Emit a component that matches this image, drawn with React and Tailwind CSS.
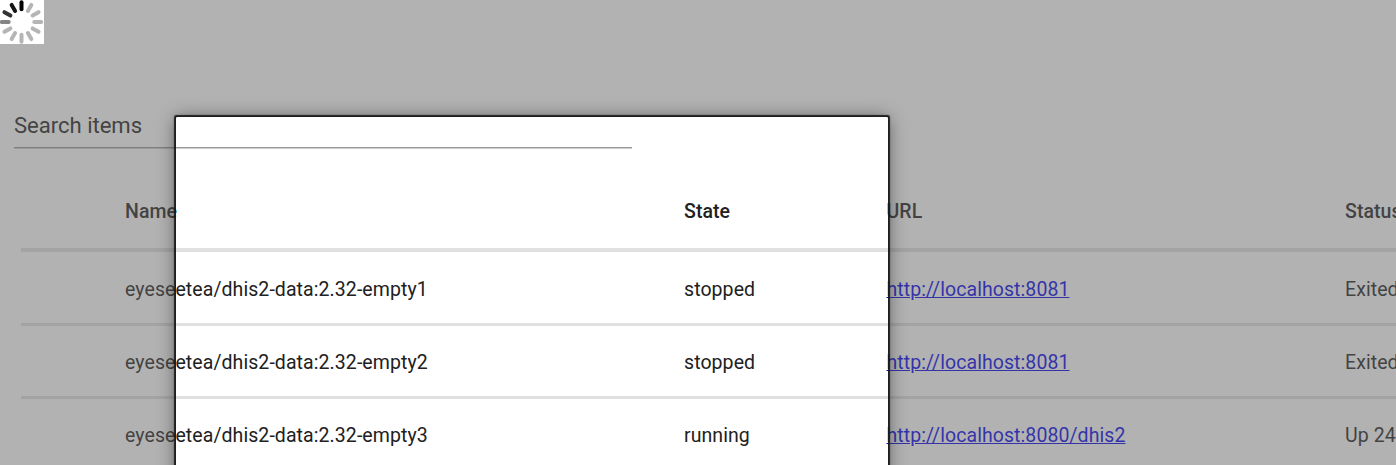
const rows = [
  ["eyeseetea/dhis2-data:2.32-empty1", "stopped", "http://localhost:8081", "Exited"],
  ["eyeseetea/dhis2-data:2.32-empty2", "stopped", "http://localhost:8081", "Exited"],
  ["eyeseetea/dhis2-data:2.32-empty3", "running", "http://localhost:8080/dhis2", "Up 24"],
];

const spokes = ["#000", "#b5b5b5", "#b5b5b5", "#b5b5b5", "#b5b5b5", "#b5b5b5", "#b5b5b5", "#b5b5b5", "#b5b5b5", "#858585", "#343434", "#161616"];

function Spinner() {
  return (
    <svg className="absolute top-0 left-0 z-20 bg-white" width="44" height="44" viewBox="0 0 44 44">
      {spokes.map((color, i) => (
        <line key={i} x1="21.5" y1="2.3" x2="21.5" y2="9.2" stroke={color} strokeWidth="4" strokeLinecap="round" transform={`rotate(${i * 30} 21.5 22)`} />
      ))}
    </svg>
  );
}

const columns = "grid grid-cols-[104px_559px_202.5px_458.5px_200px]";

export default function App() {
  return (
    <div className="relative h-[465px] w-[1396px] overflow-hidden bg-white font-['Roboto',sans-serif] text-[#212121]">
      <Spinner />
      <div className="mb-px ml-[14px] flex h-[148px] w-[618px] items-end border-b border-[#999999] shadow-[0_1px_0_#cfcfcf]">
        <span className="mb-[8px] text-[22.1px] leading-[28px] tracking-[-0.03px] text-[#212121]">Search items</span>
      </div>
      <div className="ml-[21px] w-[1524px] text-[19.5px] leading-[28px] tracking-[0.075px]">
        <div className={`${columns} h-[103px] items-center border-b-4 border-[#e0e0e0] pt-[27px] font-medium`}>
          <span />
          <span>Name</span>
          <span>State</span>
          <span>URL</span>
          <span>Status</span>
        </div>
        {rows.map(([name, state, url, status]) => (
          <div key={name} className={`${columns} h-[73px] items-center border-b-3 border-[#e0e0e0] pt-[4px] nth-2:h-[74px] nth-2:pt-[5px]`}>
            <span />
            <span>{name}</span>
            <span>{state}</span>
            <a href="#" className="text-[#0000ee] underline">{url}</a>
            <span>{status}</span>
          </div>
        ))}
      </div>
      <div className="absolute top-[117px] left-[176px] z-10 h-[600px] w-[712px] rounded-[1px] shadow-[0_0_1px_1.5px_rgba(25,25,25,0.95),0_1px_18px_rgba(0,0,0,0.5),0_0_0_5000px_rgba(102,102,102,0.5)]" />
    </div>
  );
}
